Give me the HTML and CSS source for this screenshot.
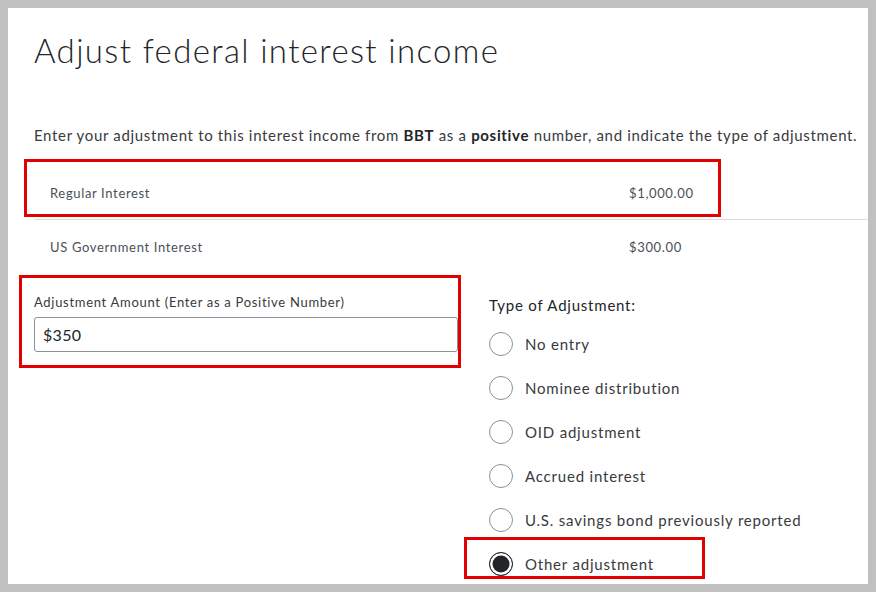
FILE: index.html
```html
<!DOCTYPE html>
<html lang="en">
<head>
    <meta charset="UTF-8">
    <meta name="viewport" content="width=device-width, initial-scale=1.0">
    <title>Adjust federal interest income</title>
    <link rel="stylesheet" href="styles.css">
</head>
<body>
    <main class="page">
        <h1>Adjust federal interest income</h1>
        <p class="intro">Enter your adjustment to this interest income from <b>BBT</b> as a <b>positive</b> number, and indicate the type of adjustment.</p>

        <div class="rows">
            <div class="row">
                <span>Regular Interest</span>
                <span>$1,000.00</span>
                <i class="mark mark-row"></i>
            </div>
            <div class="row">
                <span>US Government Interest</span>
                <span>$300.00</span>
            </div>
        </div>

        <div class="form">
            <div class="amount">
                <label for="amount">Adjustment Amount (Enter as a Positive Number)</label>
                <input id="amount" type="text" value="$350">
                <i class="mark mark-amount"></i>
            </div>
            <div class="type">
                <p class="legend">Type of Adjustment:</p>
                <div class="option"><span class="radio"></span>No entry</div>
                <div class="option"><span class="radio"></span>Nominee distribution</div>
                <div class="option"><span class="radio"></span>OID adjustment</div>
                <div class="option"><span class="radio"></span>Accrued interest</div>
                <div class="option"><span class="radio"></span>U.S. savings bond previously reported</div>
                <div class="option">
                    <span class="radio checked"></span>Other adjustment
                    <i class="mark mark-option"></i>
                </div>
            </div>
        </div>
    </main>
</body>
</html>
```

FILE: styles.css
```css
* {
    box-sizing: border-box;
}
body {
    margin: 0;
    padding: 8px;
    background: #c0c0c0;
    font-family: Lato, "Noto Sans", sans-serif;
    color: #393a3d;
}
.page {
    height: 576px;
    overflow: hidden;
    background: #fff;
    padding: 22px 0 0 26px;
}
h1 {
    margin: 0;
    font-size: 33px;
    line-height: 40px;
    font-weight: 300;
    color: #21262a;
    letter-spacing: 1.35px;
}
.intro {
    margin: 55px 0 0;
    font-size: 15px;
    line-height: 20px;
    letter-spacing: 0.67px;
}
.intro b {
    font-weight: 700;
    color: #21262a;
}
.rows {
    margin-top: 22px;
}
.row {
    position: relative;
    display: grid;
    grid-template-columns: 579px 1fr;
    align-items: center;
    height: 53px;
    padding-left: 16px;
    font-size: 13px;
    letter-spacing: 0.65px;
    color: #4a4f57;
}
.row:first-child {
    border-bottom: 1px solid #dcdcdc;
}
.form {
    display: flex;
    gap: 31px;
    margin-top: 20px;
}
.amount {
    position: relative;
    width: 424px;
    align-self: flex-start;
}
.amount label {
    display: block;
    font-size: 13px;
    line-height: 18px;
    letter-spacing: 0.7px;
    margin-bottom: 6px;
}
.amount input {
    display: block;
    width: 100%;
    height: 35px;
    border: 1px solid #8d9096;
    border-radius: 3px;
    padding: 0 8px;
    font-family: inherit;
    font-size: 16px;
    color: #21262a;
    letter-spacing: 0.3px;
}
.type {
    padding-top: 2px;
}
.legend {
    margin: 0 0 7px;
    font-size: 15px;
    line-height: 20px;
    letter-spacing: 0.78px;
    color: #21262a;
}
.option {
    position: relative;
    display: flex;
    align-items: center;
    gap: 12px;
    height: 44px;
    font-size: 15px;
    letter-spacing: 0.8px;
}
.radio {
    width: 24px;
    height: 24px;
    border: 1px solid #8d9096;
    border-radius: 50%;
    flex: none;
}
.radio.checked {
    border: 1.5px solid #21262a;
    background: #21262a;
    box-shadow: inset 0 0 0 2.5px #fff;
}
.mark {
    position: absolute;
    border: 3px solid #e30000;
    pointer-events: none;
}
.mark-row {
    left: -10px;
    top: -8px;
    width: 697px;
    height: 58px;
}
.mark-amount {
    left: -15px;
    top: -18px;
    width: 442px;
    height: 93px;
}
.mark-option {
    left: -25px;
    top: -5px;
    width: 241px;
    height: 42px;
}
```
